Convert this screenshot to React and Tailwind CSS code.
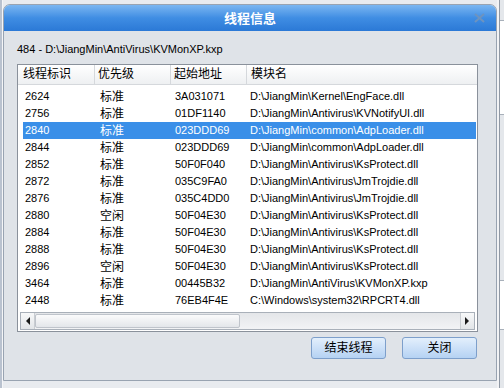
import React from "react";

const rows = [
  ["2624", "标准", "3A031071", "D:\\JiangMin\\Kernel\\EngFace.dll"],
  ["2756", "标准", "01DF1140", "D:\\JiangMin\\Antivirus\\KVNotifyUI.dll"],
  ["2840", "标准", "023DDD69", "D:\\JiangMin\\common\\AdpLoader.dll"],
  ["2844", "标准", "023DDD69", "D:\\JiangMin\\common\\AdpLoader.dll"],
  ["2852", "标准", "50F0F040", "D:\\JiangMin\\Antivirus\\KsProtect.dll"],
  ["2872", "标准", "035C9FA0", "D:\\JiangMin\\Antivirus\\JmTrojdie.dll"],
  ["2876", "标准", "035C4DD0", "D:\\JiangMin\\Antivirus\\JmTrojdie.dll"],
  ["2880", "空闲", "50F04E30", "D:\\JiangMin\\Antivirus\\KsProtect.dll"],
  ["2884", "标准", "50F04E30", "D:\\JiangMin\\Antivirus\\KsProtect.dll"],
  ["2888", "标准", "50F04E30", "D:\\JiangMin\\Antivirus\\KsProtect.dll"],
  ["2896", "空闲", "50F04E30", "D:\\JiangMin\\Antivirus\\KsProtect.dll"],
  ["3464", "标准", "00445B32", "D:\\JiangMin\\AntiVirus\\KVMonXP.kxp"],
  ["2448", "标准", "76EB4F4E", "C:\\Windows\\system32\\RPCRT4.dll"],
];

function Arrow({ dir }) {
  return (
    <svg width="5" height="8" viewBox="0 0 5 8">
      {dir === "left" ? (
        <polygon points="5,0 5,8 1,4" fill="#1a1a1a" />
      ) : (
        <polygon points="0,0 0,8 4,4" fill="#1a1a1a" />
      )}
    </svg>
  );
}

export default function App() {
  return (
    <div
      className="w-[504px] h-[388px] flex bg-[#e8ebef] overflow-hidden text-black"
      style={{ fontFamily: '"Liberation Sans", "Noto Sans CJK SC", sans-serif' }}
    >
      <div className="w-[3px] h-full bg-[#b9c2cf] border-r border-[#f4f5f7]" />

      <div className="mt-[4px] w-[494px] h-[377px] flex flex-col border border-[#98a3b1] rounded-t-[7px] bg-[#dfe3e8] overflow-hidden">
        <div className="h-[26px] shrink-0 grid grid-cols-[1fr_auto_1fr] items-center bg-gradient-to-b from-[#7ab6f1] via-[#3f8de3] to-[#2b79d6]">
          <div />
          <span className="text-[13px] font-bold text-white pt-[1px]">线程信息</span>
          <div className="flex justify-end pr-[11px]">
            <svg width="11" height="10" viewBox="0 0 11 10">
              <path d="M1 1 L10 9 M10 1 L1 9" stroke="#6d93bf" strokeWidth="2" />
            </svg>
          </div>
        </div>

        <div className="pl-[13px] pr-[18px] flex flex-col">
          <div className="mt-[10px] h-[17px] leading-[17px] text-[11px]">
            {"484 - D:\\JiangMin\\AntiVirus\\KVMonXP.kxp"}
          </div>

          <div className="mt-[6px] h-[268px] border border-[#8a919b] bg-white flex flex-col">
            <div className="h-[20px] shrink-0 flex border-b border-[#d5d8dc] bg-gradient-to-b from-white to-[#eef0f2] text-[12px] leading-[19px]">
              <div className="w-[77px] pl-[5px] border-r border-[#d5d8dc]">线程标识</div>
              <div className="w-[76px] pl-[3px] border-r border-[#d5d8dc]">优先级</div>
              <div className="w-[76px] pl-[3px] border-r border-[#d5d8dc]">起始地址</div>
              <div className="flex-1 pl-[4px]">模块名</div>
            </div>

            <div className="pt-[3px] pl-[5px] pr-[1px] flex flex-col">
              {rows.map((r, i) => (
                <div
                  key={i}
                  className={
                    "h-[17px] flex items-center text-[11px] " +
                    (r[0] === "2840" ? "bg-[#3a8fe8] text-white" : "")
                  }
                >
                  <div className="w-[77px] pl-[2px]">{r[0]}</div>
                  <div className="w-[75px] text-[12px]">{r[1]}</div>
                  <div className="w-[75px]">{r[2]}</div>
                  <div className="flex-1 whitespace-nowrap">{r[3]}</div>
                </div>
              ))}
            </div>

            <div className="mt-[3px] mx-[2px] h-[18px] flex border border-[#a9b0b9] bg-gradient-to-b from-[#e4e6e9] to-[#f2f3f5]">
              <div className="w-[14px] flex items-center justify-center border-r border-[#c9cdd2] bg-gradient-to-b from-[#f7f8f9] to-[#e2e5e8]">
                <Arrow dir="left" />
              </div>
              <div className="w-[205px] my-[1px] rounded-[2px] border border-[#bfc4cb] bg-gradient-to-b from-[#fbfbfc] to-[#e3e6ea]" />
              <div className="flex-1" />
              <div className="w-[14px] flex items-center justify-center border-l border-[#c9cdd2] bg-gradient-to-b from-[#f7f8f9] to-[#e2e5e8]">
                <Arrow dir="right" />
              </div>
            </div>
          </div>

          <div className="mt-[5px] pr-[1px] flex justify-end gap-[16px]">
            <button className="w-[75px] h-[22px] rounded-[3px] border border-[#7d9fcb] bg-gradient-to-b from-[#e3effc] to-[#b5d2f3] text-[12px]">
              结束线程
            </button>
            <button className="w-[75px] h-[22px] rounded-[3px] border border-[#7d9fcb] bg-gradient-to-b from-[#e3effc] to-[#b5d2f3] text-[12px]">
              关闭
            </button>
          </div>
        </div>
      </div>

      <div className="flex-1 h-full flex bg-[#e4e7eb]">
        <div className="w-[2px] h-full bg-[#f2f3f5]" />
        <div className="w-[1px] h-full bg-[#8f98a4]" />
        <div className="flex-1 flex flex-col">
          <div className="mt-[20px] h-[95px] bg-white border-y border-[#a8b0ba]" />
          <div className="mt-[165px] h-[50px] bg-white border-y border-[#a8b0ba]" />
        </div>
      </div>
    </div>
  );
}
